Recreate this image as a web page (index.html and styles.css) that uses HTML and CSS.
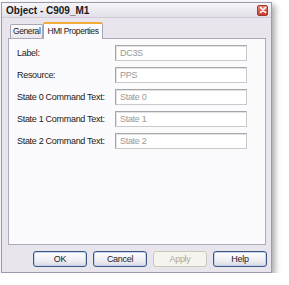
FILE: index.html
```html
<!DOCTYPE html>
<html lang="en">

<head>
    <meta charset="UTF-8">
    <title>Object - C909_M1</title>
    <link rel="stylesheet" href="styles.css">
</head>

<body>

    <div class="window">
        <div class="titlebar">
            <span class="title">Object - C909_M1</span>
            <span class="close">
                <svg width="8" height="8" viewBox="0 0 8 8">
                    <path d="M1.5 1.5 L6.5 6.5 M6.5 1.5 L1.5 6.5" stroke="#fff" stroke-width="1.6" stroke-linecap="round"/>
                </svg>
            </span>
        </div>

        <div class="tabs">
            <div class="tab">General</div>
            <div class="tab active">HMI Properties</div>
        </div>

        <div class="panel">
            <div class="row">
                <label>Label:</label>
                <div class="field">DC3S</div>
            </div>
            <div class="row">
                <label>Resource:</label>
                <div class="field">PPS</div>
            </div>
            <div class="row">
                <label>State 0 Command Text:</label>
                <div class="field">State 0</div>
            </div>
            <div class="row">
                <label>State 1 Command Text:</label>
                <div class="field">State 1</div>
            </div>
            <div class="row">
                <label>State 2 Command Text:</label>
                <div class="field">State 2</div>
            </div>
        </div>

        <div class="buttons">
            <div class="btn">OK</div>
            <div class="btn">Cancel</div>
            <div class="btn disabled">Apply</div>
            <div class="btn">Help</div>
        </div>
    </div>

</body>

</html>
```

FILE: styles.css
```css
body {
    margin: 0;
    background: #ffffff;
    font-family: "Liberation Sans", Arial, sans-serif;
    font-size: 9px;
    letter-spacing: -0.3px;
    color: #1a1a1a;
}

.window {
    width: 269px;
    height: 269px;
    margin: 2px 0 0 1px;
    border: 1px solid #9d99ad;
    background: #e8e5ed;
    box-shadow: 3px 3px 6px rgba(0, 0, 0, 0.35);
    display: flex;
    flex-direction: column;
}

.titlebar {
    height: 14px;
    display: flex;
    align-items: center;
    justify-content: space-between;
    padding: 0 3px 0 4px;
    background: linear-gradient(#f7f6f9, #e2dfe8);
    border-bottom: 1px solid #cfcbd8;
}

.title {
    font-size: 10px;
    font-weight: bold;
    letter-spacing: 0;
}

.close {
    width: 9px;
    height: 9px;
    border-radius: 2px;
    background: linear-gradient(#e8867a, #c9392c);
    border: 1px solid #a8362b;
    display: flex;
    align-items: center;
    justify-content: center;
}

.tabs {
    display: flex;
    align-items: flex-end;
    margin: 3px 0 0 8px;
    height: 17px;
}

.tab {
    height: 13px;
    line-height: 13px;
    padding: 0 2px;
    font-size: 8.5px;
    letter-spacing: -0.4px;
    border: 1px solid #a9a6b4;
    border-bottom: none;
    border-radius: 2px 2px 0 0;
    background: linear-gradient(#fbfafc, #e9e7ee);
}

.tab.active {
    height: 15px;
    line-height: 15px;
    padding: 0 3px;
    background: #fcfbfd;
    border-top: 2px solid #f3ab3b;
    position: relative;
    top: 1px;
    z-index: 1;
}

.panel {
    margin: 0 5px 0 6px;
    height: 199px;
    border: 1px solid #aeaab8;
    background: #fbfafc;
    padding: 6px 0 0 8px;
    display: flex;
    flex-direction: column;
    gap: 6px;
}

.row {
    display: flex;
    align-items: center;
    height: 16px;
}

.row label {
    width: 98px;
}

.field {
    width: 126px;
    height: 14px;
    line-height: 14px;
    padding-left: 4px;
    border: 1px solid #c9c9c9;
    border-top-color: #a6a6a6;
    border-left-color: #a6a6a6;
    box-shadow: inset 1px 1px 0 #e3e3e3;
    background: #ffffff;
    color: #9a9a9a;
}

.buttons {
    display: flex;
    justify-content: flex-end;
    gap: 6px;
    margin: 6px 4px 0 0;
}

.btn {
    width: 52px;
    height: 14px;
    line-height: 14px;
    text-align: center;
    border: 1px solid #3b5685;
    border-radius: 3px;
    background: linear-gradient(#ffffff, #ecebf0 70%, #d7d5e2);
    box-shadow: inset 0 0 0 1px #c6d4ec;
}

.btn.disabled {
    border-color: #cac7bc;
    background: #f5f4ee;
    box-shadow: none;
    color: #aca899;
}
```
